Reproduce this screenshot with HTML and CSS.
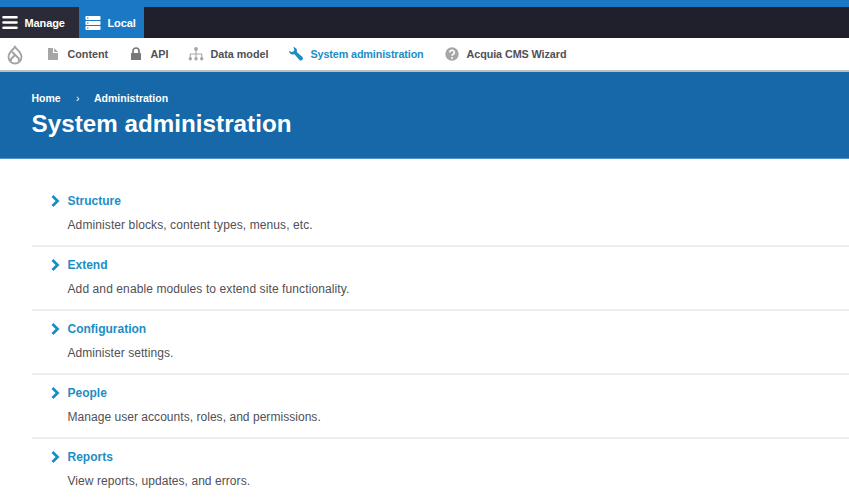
FILE: index.html
```html
<!DOCTYPE html>
<html lang="en">
<head>
<meta charset="utf-8">
<title>System administration</title>
<link rel="stylesheet" href="styles.css">
</head>
<body>
<div class="env-strip"></div>
<nav class="toolbar">
  <a class="tab tab-manage"><svg width="16" height="16" viewBox="0 0 16 16"><path d="M1.500 2.200h13M1.500 7.500h13M1.500 12.800h13" stroke="#fff" stroke-width="2.600" stroke-linecap="round"/></svg><span>Manage</span></a>
  <a class="tab tab-local"><svg width="16" height="16" viewBox="0 0 16 16"><g fill="#fff"><rect x=".5" y="1" width="15" height="4" rx=".8"/><rect x=".5" y="6" width="15" height="4" rx=".8"/><rect x=".5" y="11" width="15" height="4" rx=".8"/></g><path d="M2 3h1.500M2 8h1.500M2 13h1.500" stroke="#1b78c4" stroke-width="1.200"/></svg><span>Local</span></a>
</nav>
<nav class="tray">
  <a class="home"><svg width="16" height="20" viewBox="0 0 16 20"><g fill="none" stroke="#a3a3a3" stroke-width="1.800" stroke-linejoin="round"><path d="M8 1.500C8.500 4 14.500 6.500 14.500 12A6.500 6.500 0 0 1 1.500 12C1.500 6.500 7.500 4 8 1.500Z"/><path d="M5 6.800L11.800 13.500V16.200M8 10L4 14V16" stroke-width="1.900"/></g></svg></a>
  <a class="item content"><svg width="16" height="16" viewBox="0 0 16 16"><path fill="#a6a6a6" d="M3 2h5v5h5v7H3zM9.200 2L13 5.900H9.200z"/></svg><span>Content</span></a>
  <a class="item api"><svg width="16" height="16" viewBox="0 0 16 16"><path d="M5 8V5a3 3 0 0 1 6 0v3" fill="none" stroke="#787878" stroke-width="1.700"/><rect x="3" y="7" width="10" height="7" rx=".5" fill="#787878"/></svg><span>API</span></a>
  <a class="item model"><svg width="16" height="16" viewBox="0 0 16 16"><g fill="#a6a6a6"><circle cx="8" cy="3" r="1.900"/><circle cx="2.300" cy="12.700" r="1.700"/><circle cx="8" cy="12.700" r="1.700"/><circle cx="13.700" cy="12.700" r="1.700"/></g><path d="M8 3v10M2.300 13V8h11.400v5" fill="none" stroke="#a6a6a6" stroke-width="1.100"/></svg><span>Data model</span></a>
  <a class="item system active"><svg width="16" height="16" viewBox="0 0 16 16"><path fill="#1d8dc5" d="M5.100 1.200C7.800.8 9.700 3.400 8.800 6L14.500 11.100Q15.500 12.500 14.500 13.800Q13 15.200 11.600 14.200L6.500 8.300C3.800 9.400.9 7.500 1.100 4.800L3.800 6.200 6.200 4.800 6 2.300z"/></svg><span>System administration</span></a>
  <a class="item wizard"><svg width="16" height="16" viewBox="0 0 16 16"><circle cx="8" cy="8" r="6.700" fill="#a6a6a6"/><path d="M5.700 6.500a2.300 2.100 0 1 1 3.500 1.700Q8 8.800 8 9.800" fill="none" stroke="#fff" stroke-width="1.600"/><circle cx="8" cy="12" r="1" fill="#fff"/></svg><span>Acquia CMS Wizard</span></a>
</nav>
<header class="hero">
  <div class="crumbs"><span class="crumb-home">Home</span><span class="sep">›</span><span class="crumb-admin">Administration</span></div>
  <h1>System administration</h1>
</header>
<main class="list">
  <section><h2><svg width="10" height="12" viewBox="0 0 10 12"><path d="M1.500 1L6.500 6 1.500 11"/></svg><span>Structure</span></h2><p class="d1">Administer blocks, content types, menus, etc.</p></section>
  <section><h2><svg width="10" height="12" viewBox="0 0 10 12"><path d="M1.500 1L6.500 6 1.500 11"/></svg><span>Extend</span></h2><p class="d2">Add and enable modules to extend site functionality.</p></section>
  <section><h2><svg width="10" height="12" viewBox="0 0 10 12"><path d="M1.500 1L6.500 6 1.500 11"/></svg><span>Configuration</span></h2><p class="d3">Administer settings.</p></section>
  <section><h2><svg width="10" height="12" viewBox="0 0 10 12"><path d="M1.500 1L6.500 6 1.500 11"/></svg><span>People</span></h2><p class="d4">Manage user accounts, roles, and permissions.</p></section>
  <section><h2><svg width="10" height="12" viewBox="0 0 10 12"><path d="M1.500 1L6.500 6 1.500 11"/></svg><span>Reports</span></h2><p class="d5">View reports, updates, and errors.</p></section>
</main>
</body>
</html>
```
FILE: styles.css
```css
* { box-sizing: border-box; }
html, body { height: 100%; }
body { margin: 0; overflow: hidden; background: #fff; font-family: "Liberation Sans", Arial, sans-serif; color: #505056; }
svg { display: block; flex: none; }
.env-strip { height: 7px; background: #1b78c4; }
.toolbar { display: flex; height: 31px; background: #20202c; }
.tab { display: flex; align-items: center; color: #fff; font-size: 11px; font-weight: 700; }
.tab-manage { width: 79px; padding-left: 2px; gap: 6.500px; background: #2b2b37; }
.tab-local { width: 65px; padding-left: 6px; gap: 6.500px; background: #1b78c4; letter-spacing: -.1px; }
.tab-manage span { letter-spacing: -.1px; }
.tray { display: flex; height: 34px; background: #fff; border-bottom: 2px solid #b9bfc2; }
.home { width: 45px; padding: 7px 0 0 7px; }
.item { display: flex; align-items: center; gap: 6.500px; color: #505056; font-size: 10.800px; font-weight: 700; white-space: nowrap; letter-spacing: -.03px; }
.content { width: 83px; }
.api { width: 60px; }
.model { width: 100px; }
.system { width: 156px; letter-spacing: -.13px; }
.wizard { letter-spacing: -.08px; }
.active { color: #1d8dc5; }
.hero { height: 87px; padding: 19px 0 0 31.500px; background: #1668a8; border-bottom: 1px solid #5195c8; color: #fff; }
.crumbs { display: flex; height: 14px; line-height: 14px; font-size: 10.500px; font-weight: 700; }
.crumb-home { width: 44.500px; }
.sep { width: 18px; font-weight: 400; }
h1 { margin: 4px 0 0; font-size: 24.200px; line-height: 30px; font-weight: 700; letter-spacing: .03px; }
.list { padding: 24px 0 0 32px; }
section { height: 64px; border-bottom: 2px solid #ededed; }
h2 { display: flex; align-items: center; height: 35px; margin: 0; padding-left: 19px; gap: 6.500px; font-size: 12px; font-weight: 700; color: #1d8dc5; }
h2 path { fill: none; stroke: #1d8dc5; stroke-width: 2.800; }
p { margin: 1px 0 0 35.500px; font-size: 12px; line-height: 12px; letter-spacing: .06px; }
.d1, .d2 { letter-spacing: .1px; }
.d4 { letter-spacing: .04px; }
```
